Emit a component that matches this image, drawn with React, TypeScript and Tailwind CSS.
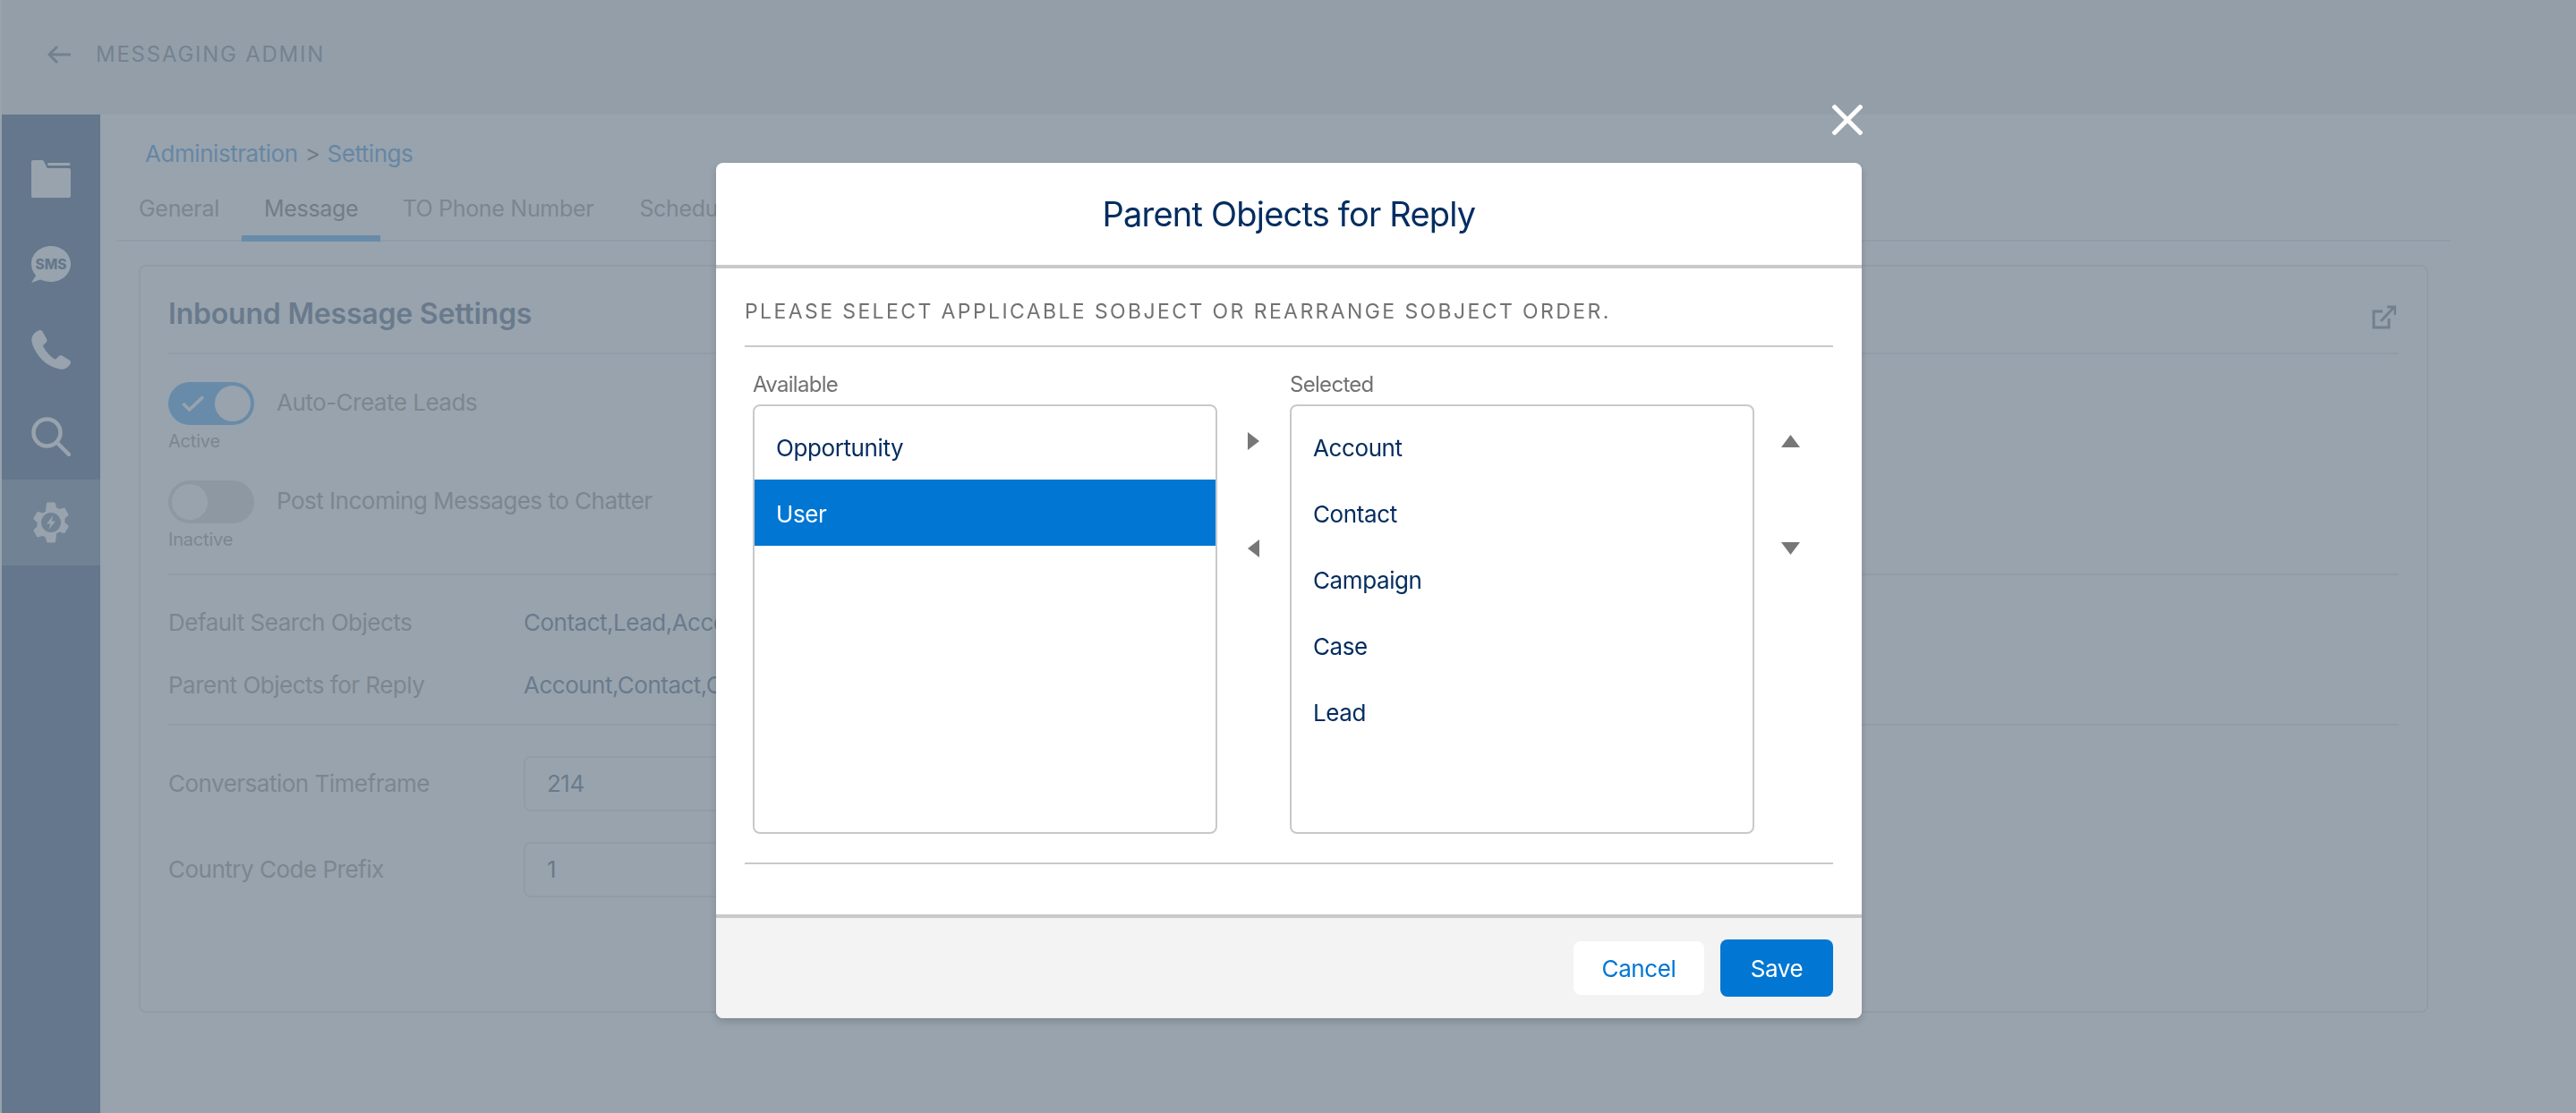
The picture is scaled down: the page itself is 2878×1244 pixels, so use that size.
const font = "font-['Inter','Noto_Sans',sans-serif]";

const available = ["Opportunity", "User"];
const selected = ["Account", "Contact", "Campaign", "Case", "Lead"];

function Sidebar() {
  return (
    <div className="ml-[2px] flex w-[110px] shrink-0 flex-col bg-[#00255c] pt-[51px]">
      <div className="flex h-[96px] justify-center">
        <svg width="44" height="42" viewBox="0 0 44 42" fill="#fff">
          <path d="M2 0h10c.900 0 1.500.400 1.900 1.200L17.700 9H42c1.100 0 2 .900 2 2v29c0 1.100-.900 2-2 2H2c-1.100 0-2-.900-2-2V2C0 .900.900 0 2 0z" />
          <rect x="18" y="3" width="25.500" height="3" rx="1.500" />
        </svg>
      </div>
      <div className="flex h-[94px] justify-center">
        <svg width="44" height="41" viewBox="0 0 44 41">
          <path d="M22 0C9.800 0 0 8.900 0 20c0 5 2 9.500 5.200 13L0 41l10-3.400c3.600 1.600 7.700 2.400 12 2.400 12.200 0 22-8.900 22-20S34.200 0 22 0z" fill="#fff" />
          <text x="22" y="26" textAnchor="middle" fontFamily="Inter, sans-serif" fontSize="15.500" fontWeight="800" fill="#00255c">SMS</text>
        </svg>
      </div>
      <div className="flex h-[97px] justify-center">
        <svg width="44" height="45" viewBox="0 0 44 45" fill="#fff">
          <path d="M8.500.300c1.500-.700 3.200-.100 4 1.300l4.600 8.300c.700 1.300.500 2.800-.500 3.800l-3 2.900c-.500.500-.600 1.200-.200 1.800 2.800 5.500 7.300 10.800 12.700 14 .600.300 1.300.200 1.800-.300l2.600-2.900c1-1.100 2.500-1.300 3.800-.600l8.200 5c1.300.800 1.800 2.500 1.100 3.900-1.500 3-3.900 5.100-7 6-2.200.600-4.500.300-6.700-.600C16 40 5.500 28.500 1.100 15.500.300 13 0 10.600.700 8.200 1.600 4.700 4.600 1.800 8.500.300z" />
        </svg>
      </div>
      <div className="flex h-[70px] justify-center">
        <svg width="44" height="44" viewBox="0 0 44 44" fill="none" stroke="#fff" strokeWidth="4.500" strokeLinecap="round">
          <circle cx="17.500" cy="17.500" r="15" />
          <path d="M29 29l13 13" />
        </svg>
      </div>
      <div className="flex h-[96px] items-center justify-center bg-[#3f5b87]">
        <svg width="42" height="46" viewBox="0 0 42 46">
          <path
            fill="#fff"
            stroke="#fff"
            strokeWidth="3"
            strokeLinejoin="round"
            d="M17.500 2h7l1.300 5.500c1.600.500 3 1.300 4.200 2.300l5.500-1.700 3.500 6.100-4.200 3.900c.300 1.800.300 3.600 0 5.400l4.200 3.900-3.500 6.100-5.500-1.700c-1.200 1-2.600 1.800-4.200 2.300L24.500 44h-7l-1.300-5.500c-1.600-.500-3-1.300-4.200-2.300l-5.500 1.700L3 31.800l4.200-3.900c-.300-1.800-.300-3.600 0-5.400L3 18.600l3.500-6.100L12 14.200c1.200-1 2.600-1.800 4.200-2.300L17.500 2z"
          />
          <circle cx="21" cy="23" r="11" fill="#3f5b87" />
          <path d="M23.500 15l-7.500 9.500h4.300L18.500 31l7.500-9.500h-4.300L23.500 15z" fill="#fff" />
        </svg>
      </div>
    </div>
  );
}

function Toggle({ on }: { on: boolean }) {
  return (
    <div className={`flex h-[48px] w-[96px] items-center rounded-full px-[4px] ${on ? "justify-end bg-[#1589ee]" : "justify-start bg-[#c9c7c5]"}`}>
      {on && (
        <svg className="mr-[12px]" width="25" height="18" viewBox="0 0 25 18" fill="none" stroke="#fff" strokeWidth="3.500">
          <path d="M1.500 9l7 7L24 1.500" />
        </svg>
      )}
      <div className="h-[40px] w-[40px] shrink-0 rounded-full bg-white" />
    </div>
  );
}

function BackgroundPage() {
  return (
    <div className={`flex h-screen w-full flex-col overflow-hidden bg-white ${font}`}>
      <div className="ml-[2px] flex h-[128px] items-center gap-[28px] bg-[#e5e7ea] pb-[6px] pl-[51px]">
        <svg width="26" height="20" viewBox="0 0 26 20" fill="none" stroke="#47525f" strokeWidth="3">
          <path d="M26 10H2M11 1L2 10l9 9" />
        </svg>
        <span className="text-[24px] leading-[28px] tracking-[1.750px] text-[#4f5c68]">MESSAGING ADMIN</span>
      </div>
      <div className="flex min-h-0 flex-1">
        <Sidebar />
        <div className="min-w-0 flex-1 pl-[18px] text-[26px] leading-[32px] tracking-[-0.5px]">
          <div className="h-[142px] w-[2608px] border-b-2 border-[#d8dde6] pt-[28px]">
            <div className="pl-[32px] tracking-[-0.45px] text-[#3e3e3c]">
              <span className="text-[#0070d2]">Administration</span>
              <span className="mx-[8px]">&gt;</span>
              <span className="text-[#0070d2]">Settings</span>
            </div>
            <div className="flex h-[82px] items-end pl-[25px] text-[25px] tracking-[-0.3px] text-[#706e6b]">
              <span className="mr-[25px] pb-[21px]">General</span>
              <span className="mr-[24px] border-b-[7px] border-[#1589ee] px-[25px] pb-[14px] text-[#3e3e3c]">Message</span>
              <span className="mr-[51px] pb-[21px]">TO Phone Number</span>
              <span className="pb-[21px]">Schedule</span>
            </div>
          </div>
          <div className="mt-[26px] ml-[25px] flex h-[836px] w-[2558px] flex-col rounded-[8px] border-2 border-[#dddbda] px-[31px]">
            <div className="flex h-[98px] items-center justify-between border-b-2 border-[#d8dde6] pt-[10px]">
              <h2 className="text-[32px] leading-[38px] font-semibold tracking-[-0.2px] text-[#16325c]">Inbound Message Settings</h2>
              <svg className="mt-[7px] mr-[3px]" width="27" height="27" viewBox="0 0 27 27" fill="none" stroke="#47525f" strokeWidth="3">
                <path d="M12 7H2v18h17V15" />
                <path d="M10 18L25 2M17 2h9v9" />
              </svg>
            </div>
            <div className="border-b-2 border-[#dddbda] pt-[31px] pb-[26px]">
              <div className="flex gap-[25px]">
                <div>
                  <Toggle on />
                  <div className="mt-[6px] text-[20px] leading-[24px] tracking-[-0.2px] text-[#706e6b]">Active</div>
                </div>
                <span className="pt-[7px] text-[#706e6b]">Auto-Create Leads</span>
              </div>
              <div className="mt-[32px] flex gap-[25px]">
                <div>
                  <Toggle on={false} />
                  <div className="mt-[6px] text-[20px] leading-[24px] tracking-[-0.2px] text-[#706e6b]">Inactive</div>
                </div>
                <span className="pt-[7px] text-[#706e6b]">Post Incoming Messages to Chatter</span>
              </div>
            </div>
            <div className="border-b-2 border-[#dddbda] pt-[37px] pb-[27px]">
              <div className="flex">
                <span className="w-[397px] text-[#706e6b]">Default Search Objects</span>
                <span className="text-[#16325c]">Contact,Lead,Account</span>
              </div>
              <div className="mt-[38px] flex">
                <span className="w-[397px] text-[#706e6b]">Parent Objects for Reply</span>
                <span className="text-[#16325c]">Account,Contact,Campaign</span>
              </div>
            </div>
            <div className="pt-[34px]">
              <div className="flex items-center">
                <span className="w-[397px] text-[#706e6b]">Conversation Timeframe</span>
                <div className="flex h-[62px] w-[500px] items-center rounded-[8px] border-2 border-[#dddbda] pl-[24px] text-[#16325c]">214</div>
              </div>
              <div className="mt-[34px] flex items-center">
                <span className="w-[397px] text-[#706e6b]">Country Code Prefix</span>
                <div className="flex h-[62px] w-[500px] items-center rounded-[8px] border-2 border-[#dddbda] pl-[24px] text-[#16325c]">1</div>
              </div>
            </div>
          </div>
        </div>
      </div>
    </div>
  );
}

function ListBox({ label, items, active }: { label: string; items: string[]; active?: string }) {
  return (
    <div className="w-[519px] shrink-0">
      <div className="h-[40px] text-[24px] leading-[36px] tracking-[-0.7px] text-[#727272]">{label}</div>
      <div className="h-[480px] rounded-[8px] border-2 border-[#c9c9c9] py-[8px]">
        {items.map((item) => (
          <div
            key={item}
            className={`flex h-[74px] items-center pt-[3px] pl-[24px] text-[26px] leading-[30px] tracking-[-0.4px] ${item === active ? "bg-[#0176d3] text-white" : "text-[#032d60]"}`}
          >
            {item}
          </div>
        ))}
      </div>
    </div>
  );
}

export default function App() {
  return (
    <div className={`relative h-screen w-full overflow-hidden ${font}`}>
      <BackgroundPage />
      <div className="absolute inset-0 flex transform-gpu flex-col items-center bg-[rgba(126,140,153,0.8)] pt-[182px]">
        <div className="relative ml-[2px] h-[956px] w-[1280px] rounded-[8px] bg-white shadow-[0_4px_8px_rgba(0,0,0,0.16)]">
          <button className="absolute -top-[65px] -right-[1px] h-[34px] w-[34px] text-white">
            <svg width="34" height="34" viewBox="0 0 34 34" fill="none" stroke="#fff" strokeWidth="5">
              <path d="M1 1l32 32M33 1L1 33" />
            </svg>
          </button>
          <div className="flex h-[118px] items-center justify-center border-b-4 border-[#c9c9c9] text-[38px] leading-[44px] font-normal tracking-[-0.8px] text-[#032d60]">
            Parent Objects for Reply
          </div>
          <div className="px-[32px]">
            <div className="flex h-[88px] items-start border-b-2 border-[#c9c9c9] pt-[33px] text-[23px] leading-[30px] tracking-[2.400px] text-[#727272]">
              PLEASE SELECT APPLICABLE SOBJECT OR REARRANGE SOBJECT ORDER.
            </div>
            <div className="flex pt-[24px] pl-[9px]">
              <ListBox label="Available" items={available} active="User" />
              <div className="flex w-[81px] shrink-0 flex-col items-center pt-[71px]">
                <svg width="13" height="20" viewBox="0 0 13 20" fill="#777">
                  <path d="M0 0l13 10L0 20z" />
                </svg>
                <svg className="mt-[100px]" width="13" height="20" viewBox="0 0 13 20" fill="#777">
                  <path d="M13 0L0 10l13 10z" />
                </svg>
              </div>
              <ListBox label="Selected" items={selected} />
              <div className="flex w-[80px] shrink-0 flex-col items-center pt-[74px]">
                <svg width="21" height="14" viewBox="0 0 21 14" fill="#777">
                  <path d="M10.500 0L21 14H0z" />
                </svg>
                <svg className="mt-[106px]" width="21" height="14" viewBox="0 0 21 14" fill="#777">
                  <path d="M0 0h21L10.500 14z" />
                </svg>
              </div>
            </div>
            <div className="mt-[32px] border-b-2 border-[#c9c9c9]" />
          </div>
          <div className="mt-[56px] flex h-[116px] items-center justify-end gap-[18px] rounded-b-[8px] border-t-4 border-[#c9c9c9] bg-[#f3f3f3] px-[32px] text-[26px] tracking-[-0.4px]">
            <button className="h-[60px] w-[146px] rounded-[8px] bg-white text-[#0176d3]">Cancel</button>
            <button className="h-[64px] w-[126px] rounded-[8px] bg-[#0176d3] text-white">Save</button>
          </div>
        </div>
      </div>
    </div>
  );
}
